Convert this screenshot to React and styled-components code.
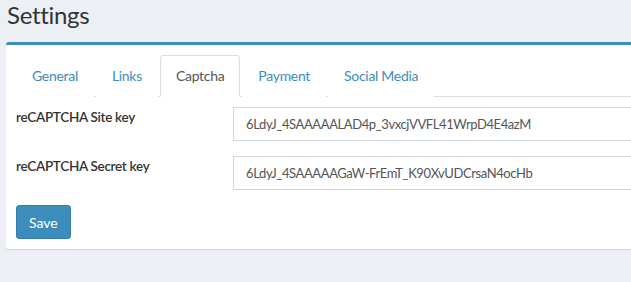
import React, { useState } from "react";
import styled, { createGlobalStyle } from "styled-components";

const GlobalStyle = createGlobalStyle`
  html, body {
    margin: 0;
    padding: 0;
    background: #ecf0f5;
    overflow: hidden;
  }
  body {
    font-family: Lato, "Liberation Sans", sans-serif;
    font-size: 14px;
    color: #333;
  }
`;

const Page = styled.div`
  width: 760px;
  padding: 0 0 0 6px;
  min-height: 282px;
`;

const Title = styled.h1`
  margin: 0;
  padding: 0 0 0 1px;
  font-size: 24px;
  font-weight: 400;
  line-height: 29px;
  height: 42px;
  letter-spacing: -0.3px;
  color: #333;
`;

const Box = styled.div`
  background: #fff;
  border-top: 3px solid #3c8dbc;
  border-radius: 3px;
  box-shadow: 0 1px 1px rgba(0, 0, 0, 0.12);
  padding: 10px;
`;

const Tabs = styled.ul`
  display: flex;
  list-style: none;
  margin: 0;
  padding: 0;
  border-bottom: 1px solid #ddd;
`;

const Tab = styled.li`
  margin: 0 2px -1px 0;
  padding: 10px 15px;
  line-height: 20px;
  font-size: 14px;
  letter-spacing: -0.3px;
  cursor: pointer;
  color: ${(p) => (p.$active ? "#555" : "#3c8dbc")};
  background: #fff;
  border: 1px solid ${(p) => (p.$active ? "#ddd" : "transparent")};
  border-bottom-color: ${(p) => (p.$active ? "#fff" : "transparent")};
  border-radius: 4px 4px 0 0;
`;

const Form = styled.div`
  padding-top: 10px;
`;

const Row = styled.div`
  display: grid;
  grid-template-columns: 217px 1fr;
  margin-bottom: 15px;
`;

const Label = styled.label`
  font-weight: 600;
  font-size: 13.5px;
  letter-spacing: -0.3px;
  line-height: 20px;
  color: #333;
`;

const Input = styled.input`
  height: 34px;
  box-sizing: border-box;
  padding: 6px 12px;
  border: 1px solid #d2d6de;
  font-family: inherit;
  font-size: 13px;
  letter-spacing: -0.4px;
  color: #555;
  outline: none;
`;

const Button = styled.button`
  height: 34px;
  padding: 6px 12px;
  background: #3c8dbc;
  border: 1px solid #367fa9;
  border-radius: 3px;
  color: #fff;
  font-family: inherit;
  font-size: 14px;
  cursor: pointer;
`;

const tabs = ["General", "Links", "Captcha", "Payment", "Social Media"];

export default function App() {
  const [active, setActive] = useState("Captcha");
  return (
    <Page>
      <GlobalStyle />
      <Title>Settings</Title>
      <Box>
        <Tabs>
          {tabs.map((t) => (
            <Tab key={t} $active={t === active} onClick={() => setActive(t)}>
              {t}
            </Tab>
          ))}
        </Tabs>
        <Form>
          <Row>
            <Label>reCAPTCHA Site key</Label>
            <Input defaultValue="6LdyJ_4SAAAAALAD4p_3vxcjVVFL41WrpD4E4azM" />
          </Row>
          <Row>
            <Label>reCAPTCHA Secret key</Label>
            <Input defaultValue="6LdyJ_4SAAAAAGaW-FrEmT_K90XvUDCrsaN4ocHb" />
          </Row>
          <Button>Save</Button>
        </Form>
      </Box>
    </Page>
  );
}
